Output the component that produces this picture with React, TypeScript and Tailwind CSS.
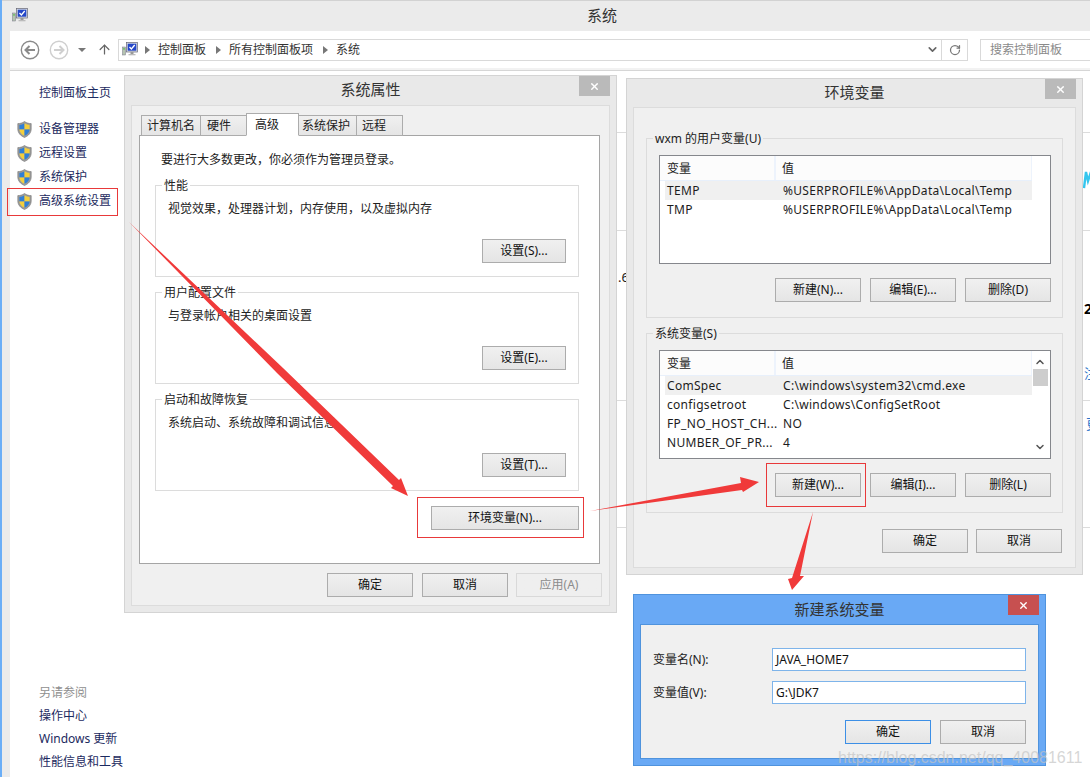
import type { ReactNode } from 'react';
import { ArrowUp, ChevronDown, RotateCw, ChevronUp, X } from 'lucide-react';

function Shield() {
  return (
    <svg width="15" height="17" viewBox="0 0 15 17" className="shrink-0">
      <path d="M7.5 0.5 C5.5 2 3 2.6 0.8 2.6 L0.8 8 C0.8 12 3.8 15 7.5 16.5 C11.2 15 14.2 12 14.2 8 L14.2 2.6 C12 2.6 9.5 2 7.5 0.5 Z" fill="#9a9a9a" stroke="#777" strokeWidth="0.6" />
      <path d="M7.5 2.2 C5.9 3.2 4.2 3.8 2.4 3.9 L2.4 8.4 L7.5 8.4 Z" fill="#2f7fd6" />
      <path d="M7.5 2.2 C9.1 3.2 10.8 3.8 12.6 3.9 L12.6 8.4 L7.5 8.4 Z" fill="#f4cf3c" />
      <path d="M2.4 8.4 L7.5 8.4 L7.5 14.8 C4.6 13.6 2.6 11.4 2.4 8.4 Z" fill="#f4cf3c" />
      <path d="M12.6 8.4 L7.5 8.4 L7.5 14.8 C10.4 13.6 12.4 11.4 12.6 8.4 Z" fill="#2f7fd6" />
    </svg>
  );
}

function MonitorIcon() {
  return (
    <svg width="16" height="15" viewBox="0 0 16 15" className="shrink-0">
      <rect x="0.5" y="5" width="3" height="8" fill="#b5c4b0" stroke="#778" strokeWidth="0.5" />
      <rect x="1.2" y="6.2" width="1.6" height="1.4" fill="#5bbf4f" />
      <rect x="4.5" y="0.5" width="11" height="9.5" fill="#d9dde3" stroke="#667" strokeWidth="0.7" />
      <rect x="5.7" y="1.7" width="8.6" height="7" fill="#2446c8" />
      <path d="M7.5 5 L9.4 7 L12.7 3" fill="none" stroke="#fff" strokeWidth="1.3" />
      <rect x="8.5" y="10" width="3" height="2" fill="#999" />
      <rect x="6.5" y="12" width="7" height="1.3" fill="#bbb" />
    </svg>
  );
}

function BackCircle() {
  return (
    <svg width="20" height="20" viewBox="0 0 20 20" className="shrink-0">
      <circle cx="10" cy="10" r="8.7" fill="#fff" stroke="#8a8a8a" strokeWidth="1.4" />
      <path d="M15 10 L6 10 M9.5 6 L5.5 10 L9.5 14" fill="none" stroke="#8a8a8a" strokeWidth="2" />
    </svg>
  );
}

function ForwardCircle() {
  return (
    <svg width="20" height="20" viewBox="0 0 20 20" className="shrink-0">
      <circle cx="10" cy="10" r="8.7" fill="#fff" stroke="#cfcfcf" strokeWidth="1.4" />
      <path d="M5 10 L14 10 M10.5 6 L14.5 10 L10.5 14" fill="none" stroke="#cfcfcf" strokeWidth="2" />
    </svg>
  );
}

function Caret() {
  return <span className="w-0 h-0 border-l-[5px] border-l-[#777] border-y-[4px] border-y-transparent ml-[10px] mr-[8px]" />;
}

function Btn({ label, w = 'w-[86px]', disabled, primary }: { label: string; w?: string; disabled?: boolean; primary?: boolean }) {
  return (
    <button
      className={`${w} h-[24px] shrink-0 border text-[12px] flex items-center justify-center bg-gradient-to-b ${
        disabled
          ? 'border-[#d9d9d9] from-[#efefef] to-[#efefef] text-[#8c8c8c]'
          : primary
            ? 'border-[#3c8fe6] from-[#f0f0f0] to-[#e5e5e5] text-[#111]'
            : 'border-[#acacac] from-[#f0f0f0] to-[#e5e5e5] text-[#111]'
      }`}
    >
      {label}
    </button>
  );
}

function Group({ title, desc, button }: { title: string; desc: string; button: string }) {
  return (
    <div className="relative w-[424px] h-[92px] border border-[#dcdcdc] flex flex-col">
      <span className="absolute -top-[9px] left-[6px] bg-white px-[2px] text-[12px] leading-[18px] text-[#222]">{title}</span>
      <p className="pl-[12px] pt-[14px] text-[12px] leading-[18px] text-[#222]">{desc}</p>
      <div className="mt-auto pr-[12px] pb-[13px] flex justify-end">
        <Btn label={button} w="w-[84px]" />
      </div>
    </div>
  );
}

function CloseBtn({ red }: { red?: boolean }) {
  return (
    <div className={`absolute top-0 right-[6px] w-[31px] h-[20px] flex items-center justify-center ${red ? 'bg-[#c75050]' : 'bg-[#bababa]'}`}>
      <X size={11} strokeWidth={3} color="#fff" />
    </div>
  );
}

function Window({ className, title, titleH, blue, children }: { className: string; title: string; titleH: string; blue?: boolean; children: ReactNode }) {
  return (
    <div className={`absolute flex flex-col px-[6px] pb-[6px] border ${blue ? 'bg-[#69a9f5] border-[#4f93dd]' : 'bg-[#e9e9e9] border-[#d4d4d4]'} ${className}`}>
      <div className={`${titleH} shrink-0 flex items-center justify-center text-[15px] text-[#333]`}>{title}</div>
      <CloseBtn red={blue} />
      {children}
    </div>
  );
}

function VarList({ rows, scroll }: { rows: [string, string][]; scroll?: boolean }) {
  return (
    <div className="relative w-[392px] h-[109px] border border-[#85878c] bg-white overflow-hidden flex">
      <div className="flex-1 min-w-0">
        <div className="h-[25px] flex text-[12px] text-[#222] bg-[#fcfcfc] border-b border-[#e8f0fb]">
          <div className="w-[116px] pl-[7px] pt-px flex items-center border-r-2 border-[#edf3fc]">变量</div>
          <div className="flex-1 pl-[6px] pt-px flex items-center border-r border-[#edf3fc]">值</div>
        </div>
        {rows.map(([name, value], i) => (
          <div key={name} className={`h-[19px] ml-[5px] flex items-center text-[12px] tracking-[0.3px] text-[#1c1c1c] whitespace-nowrap ${i === 0 ? 'bg-[#f0f0f0]' : ''}`}>
            <span className="w-[116px] pl-[2px]">{name}</span>
            <span className="pl-[2px]">{value}</span>
          </div>
        ))}
      </div>
      <div className="w-[18px] shrink-0 pr-[2px] flex flex-col items-center bg-white">
        {scroll && (
          <>
            <ChevronUp size={12} strokeWidth={3} color="#555" className="mt-[5px]" />
            <div className="w-[15px] h-[17px] mt-[1px] bg-[#cdcdcd]" />
            <ChevronDown size={12} strokeWidth={3} color="#555" className="mt-auto mb-[5px]" />
          </>
        )}
      </div>
    </div>
  );
}

function VarGroup({ title, rows, scroll, buttons }: { title: string; rows: [string, string][]; scroll?: boolean; buttons: string[] }) {
  return (
    <div className="relative w-[417px] h-[180px] border border-[#dcdcdc] pl-[12px] pt-[16px] flex flex-col">
      <span className="absolute -top-[9px] left-[6px] bg-[#f0f0f0] px-[2px] text-[12px] leading-[18px] text-[#222] whitespace-nowrap">{title}</span>
      <VarList rows={rows} scroll={scroll} />
      <div className="mt-[14px] flex gap-[9px] pl-[116px]">
        {buttons.map((b) => (
          <Btn key={b} label={b} />
        ))}
      </div>
    </div>
  );
}

const TEMP_PATH = '%USERPROFILE%\\AppData\\Local\\Temp';
const userVars: [string, string][] = [
  ['TEMP', TEMP_PATH],
  ['TMP', TEMP_PATH],
];
const systemVars: [string, string][] = [
  ['ComSpec', 'C:\\windows\\system32\\cmd.exe'],
  ['configsetroot', 'C:\\windows\\ConfigSetRoot'],
  ['FP_NO_HOST_CH...', 'NO'],
  ['NUMBER_OF_PR...', '4'],
];

const tabs = [
  { label: '计算机名', box: 'w-[60px] pl-[5px]' },
  { label: '硬件', box: 'w-[47px] pl-[6px]' },
  { label: '高级', box: 'w-[53px] pl-[8px]', active: true },
  { label: '系统保护', box: 'w-[59px] pl-[3px]' },
  { label: '远程', box: 'w-[47px] pl-[5px]' },
];

export default function App() {
  return (
    <div className="relative w-[1090px] h-[777px] overflow-hidden bg-[#ebebeb] border-l-2 border-[#6aaef7] font-['Noto_Sans','Noto_Sans_CJK_SC',sans-serif] text-[12px]">
      {/* 标题栏 */}
      <div className="h-[31px] border-t border-[#d2d2d2] pl-[10px] pb-[2px] flex items-center">
        <MonitorIcon />
        <span className="ml-[559px] text-[15px] text-[#333]">系统</span>
      </div>

      <div className="ml-[8px] h-[746px] bg-white flex flex-col">
        {/* 地址栏 */}
        <div className="h-[37px] shrink-0 flex items-center">
          <div className="ml-[10px]"><BackCircle /></div>
          <div className="ml-[9px]"><ForwardCircle /></div>
          <span className="ml-[9px] w-0 h-0 border-x-[4px] border-x-transparent border-t-[4px] border-t-[#777]" />
          <ArrowUp size={15} strokeWidth={2} color="#666" className="ml-[11px] shrink-0" />
          <div className="ml-[6px] w-[850px] shrink-0 h-[22px] border border-[#d9d9d9] flex items-center pl-[3px]">
            <div className="-mr-[3px]"><MonitorIcon /></div>
            <Caret />
            <span className="text-[#333]">控制面板</span>
            <Caret />
            <span className="text-[#333]">所有控制面板项</span>
            <Caret />
            <span className="text-[#333]">系统</span>
            <div className="ml-auto h-full flex items-center">
              <ChevronDown size={13} strokeWidth={3} color="#666" className="mr-[2px]" />
              <div className="w-[26px] h-full border-l border-[#d9d9d9] flex items-center justify-center">
                <RotateCw size={12} strokeWidth={2.5} color="#777" />
              </div>
            </div>
          </div>
          <div className="ml-[12px] w-[120px] shrink-0 h-[22px] border border-[#d9d9d9] pl-[9px] flex items-center text-[#8a8a8a]">搜索控制面板</div>
        </div>
        <div className="h-[2px] shrink-0 bg-[#f2f2f2]" />
        <div className="h-px shrink-0 bg-[#d6d6d6]" />

        <div className="flex-1 flex min-h-0">
          {/* 左侧导航 */}
          <div className="w-[114px] shrink-0 flex flex-col text-[#1c2a60]">
            <div className="pl-[29px] pt-[13px] leading-[18px] mb-[15px]">控制面板主页</div>
            {['设备管理器', '远程设置', '系统保护', '高级系统设置'].map((item) => (
              <div key={item} className="h-[24px] pl-[7px] flex items-center gap-[7px] whitespace-nowrap">
                <Shield />
                {item}
              </div>
            ))}
            <div className="mt-auto pb-[4px] pl-[29px] flex flex-col whitespace-nowrap">
              <span className="h-[23px] flex items-center text-[#8f8f8f]">另请参阅</span>
              <span className="h-[23px] flex items-center">操作中心</span>
              <span className="h-[23px] flex items-center">Windows 更新</span>
              <span className="h-[23px] flex items-center">性能信息和工具</span>
            </div>
          </div>

          {/* 被遮挡的主内容 */}
          <div className="flex-1 flex flex-col">
            <div className="h-[62px] border-b border-[#dcdcdc]" />
            <div className="h-[98px] border-b border-[#dcdcdc] pl-[959px] pt-[36px]">
              <svg width="8" height="20" viewBox="0 0 8 20">
                <path d="M1 19 L3 3 L5 12 L8 3" fill="none" stroke="#35c6ee" strokeWidth="2.4" />
              </svg>
            </div>
            <div className="h-[170px] border-b border-[#dcdcdc] flex items-start">
              <span className="ml-[494px] mt-[37px] text-[13px] text-[#222]">.6</span>
              <div className="ml-auto w-[7px] pt-[70px] flex flex-col gap-[48px] overflow-hidden">
                <span className="font-bold text-[14px] leading-[16px] text-black">2</span>
                <span className="text-[13px] leading-[16px] text-[#2a73c9]">注</span>
              </div>
            </div>
            <div className="h-[127px] border-b border-[#dcdcdc] flex">
              <span className="ml-auto w-[5px] mt-[14px] overflow-hidden text-[14px] leading-[18px] text-[#2a73c9]">更</span>
            </div>
          </div>
        </div>
      </div>

      {/* 系统属性 */}
      <Window className="left-[122px] top-[75px] w-[493px] h-[538px]" title="系统属性" titleH="h-[27px] mb-[2px]">
        <div className="flex-1 bg-[#f0f0f0] border border-[#dcdcdc] px-[7px] pt-[7px] flex flex-col">
          <div className="h-[23px] pl-[2px] flex items-end relative z-10 -mb-px">
            {tabs.map((t) => (
              <div
                key={t.label}
                className={`${t.box} flex items-center text-[12px] text-[#222] border border-[#acacac] -ml-px first:ml-0 ${
                  t.active ? 'h-[23px] bg-white border-b-white relative z-10' : 'h-[21px] bg-gradient-to-b from-[#f0f0f0] to-[#e5e5e5]'
                }`}
              >
                {t.label}
              </div>
            ))}
          </div>
          <div className="w-[461px] h-[429px] bg-white border border-[#a5a5a5] pl-[15px] flex flex-col">
            <p className="pl-[6px] pt-[15px] leading-[18px] text-[#222]">要进行大多数更改，你必须作为管理员登录。</p>
            <div className="mt-[16px] flex flex-col gap-[15px]">
              <Group title="性能" desc="视觉效果，处理器计划，内存使用，以及虚拟内存" button="设置(S)..." />
              <Group title="用户配置文件" desc="与登录帐户相关的桌面设置" button="设置(E)..." />
              <Group title="启动和故障恢复" desc="系统启动、系统故障和调试信息" button="设置(T)..." />
            </div>
            <div className="w-[424px] mt-[15px] flex justify-end">
              <Btn label="环境变量(N)..." w="w-[148px]" />
            </div>
          </div>
          <div className="w-[463px] mt-[9px] flex justify-end">
            <Btn label="确定" />
            <div className="w-[9px]" />
            <Btn label="取消" />
            <div className="w-[8px]" />
            <Btn label="应用(A)" disabled />
          </div>
        </div>
      </Window>

      {/* 环境变量 */}
      <Window className="left-[624px] top-[78px] w-[457px] h-[497px]" title="环境变量" titleH="h-[26px] mb-[2px]">
        <div className="flex-1 bg-[#f0f0f0] border border-[#dcdcdc] pl-[12px] pt-[30px] flex flex-col">
          <div className="flex flex-col gap-[15px]">
            <VarGroup title="wxm 的用户变量(U)" rows={userVars} buttons={['新建(N)...', '编辑(E)...', '删除(D)']} />
            <VarGroup title="系统变量(S)" rows={systemVars} scroll buttons={['新建(W)...', '编辑(I)...', '删除(L)']} />
          </div>
          <div className="w-[417px] mt-[16px] flex justify-end gap-[8px] pr-px">
            <Btn label="确定" />
            <Btn label="取消" />
          </div>
        </div>
      </Window>

      {/* 新建系统变量 */}
      <Window className="left-[631px] top-[594px] w-[413px] h-[172px]" title="新建系统变量" titleH="h-[29px]" blue>
        <div className="flex-1 bg-[#f0f0f0] border border-[#4f93dd] px-[12px] pt-[23px] flex flex-col">
          {[
            ['变量名(N):', 'JAVA_HOME7'],
            ['变量值(V):', 'G:\\JDK7'],
          ].map(([label, value]) => (
            <div key={label} className="h-[23px] mb-[10px] flex items-center text-[#222]">
              <span className="w-[119px] shrink-0">{label}</span>
              <div className="flex-1 h-full bg-white border border-[#7eb4ea] pl-[3px] flex items-center text-[#111]">{value}</div>
            </div>
          ))}
          <div className="mt-[6px] flex justify-end gap-[9px]">
            <Btn label="确定" primary />
            <Btn label="取消" />
          </div>
        </div>
      </Window>

      {/* 红色标注 */}
      <div className="absolute left-[5px] top-[188px] w-[111px] h-[28px] border border-[#e8393a]" />
      <div className="absolute left-[764px] top-[463px] w-[100px] h-[44px] border border-[#e8393a]" />
      <svg className="absolute -left-[2px] top-0 pointer-events-none" width="1090" height="777" viewBox="0 0 1090 777">
        <rect x="417.5" y="497.5" width="166" height="40" fill="none" stroke="#e8393a" />
        <polygon points="129,222 283,368 399,480 401,478 408,496 391,488 393,486 277,373" fill="#f03a3a" />
        <polygon points="590,511 741,483 740,477 759,482 743,492 742,490" fill="#f03a3a" />
        <polygon points="813,512 800,576 804,576 792,590 788,579 792,578" fill="#f03a3a" />
      </svg>

      {/* 水印 */}
      <span className="absolute left-[836px] top-[748px] text-[16px] leading-[20px] whitespace-nowrap text-[#c4c4c4]/70 font-['Liberation_Sans',sans-serif]">
        https://blog.csdn.net/qq_40081611
      </span>
    </div>
  );
}
